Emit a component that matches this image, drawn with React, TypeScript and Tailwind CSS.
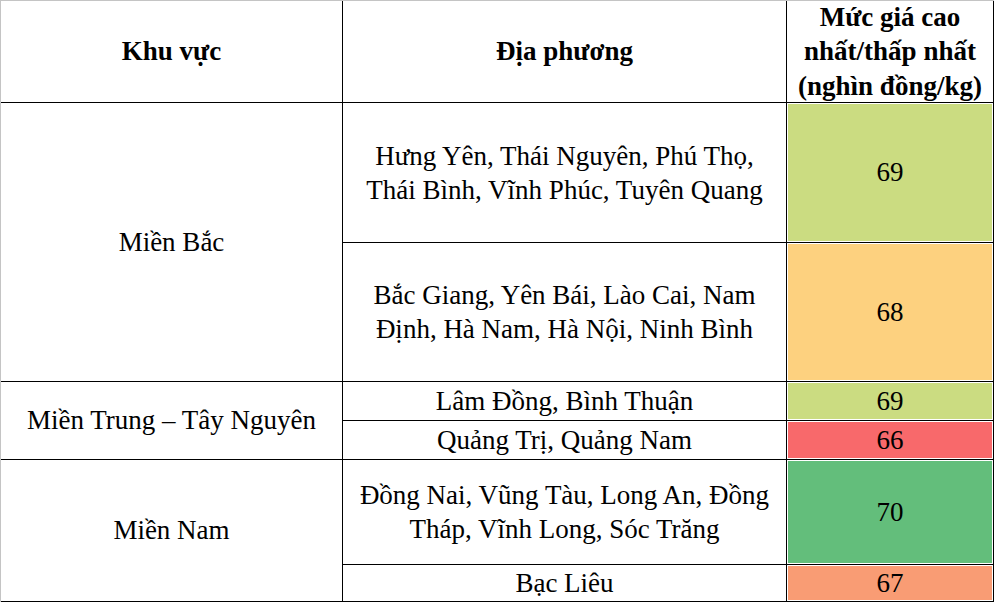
const rows = {
  north: [
    { places: ["Hưng Yên, Thái Nguyên, Phú Thọ,", "Thái Bình, Vĩnh Phúc, Tuyên Quang"], price: "69", color: "bg-[#cbdc81]" },
    { places: ["Bắc Giang, Yên Bái, Lào Cai, Nam", "Định, Hà Nam, Hà Nội, Ninh Bình"], price: "68", color: "bg-[#fdd17f]" },
  ],
  central: [
    { places: ["Lâm Đồng, Bình Thuận"], price: "69", color: "bg-[#cbdc81]" },
    { places: ["Quảng Trị, Quảng Nam"], price: "66", color: "bg-[#f8696b]" },
  ],
  south: [
    { places: ["Đồng Nai, Vũng Tàu, Long An, Đồng", "Tháp, Vĩnh Long, Sóc Trăng"], price: "70", color: "bg-[#63be7b]" },
    { places: ["Bạc Liêu"], price: "67", color: "bg-[#f99c74]" },
  ],
};

const cell = "flex items-center justify-center text-center border-r border-b border-black";

function Place({ lines }: { lines: string[] }) {
  return (
    <div className={cell}>
      <div className="leading-[34px]">
        {lines.map((l, i) => (
          <div key={i}>{l}</div>
        ))}
      </div>
    </div>
  );
}

function Price({ value, color }: { value: string; color: string }) {
  return (
    <div className="flex border-r border-b border-black bg-white p-px">
      <div className={`flex flex-1 items-center justify-center ${color}`}>{value}</div>
    </div>
  );
}

export default function App() {
  const all = [...rows.north, ...rows.central, ...rows.south];
  return (
    <div className="w-[1000px] h-[607px] bg-white font-['Liberation_Serif','Times_New_Roman',serif]">
      <div className="grid w-[994px] grid-cols-[342px_444px_207px] grid-rows-[102px_140px_139px_39px_39px_105px_37px] border-t border-l border-[#c4c4c4] text-[27px] text-black">
        <div className={`${cell} font-bold`}>Khu vực</div>
        <div className={`${cell} font-bold`}>Địa phương</div>
        <div className={`${cell} font-bold leading-[34.5px]`}>
          <div>
            Mức giá cao
            <br />
            nhất/thấp nhất
            <br />
            (nghìn đồng/kg)
          </div>
        </div>

        <div className={`${cell} row-span-2`}>Miền Bắc</div>
        <Place lines={all[0].places} />
        <Price value={all[0].price} color={all[0].color} />
        <Place lines={all[1].places} />
        <Price value={all[1].price} color={all[1].color} />

        <div className={`${cell} row-span-2`}>Miền Trung – Tây Nguyên</div>
        <Place lines={all[2].places} />
        <Price value={all[2].price} color={all[2].color} />
        <Place lines={all[3].places} />
        <Price value={all[3].price} color={all[3].color} />

        <div className={`${cell} row-span-2`}>Miền Nam</div>
        <Place lines={all[4].places} />
        <Price value={all[4].price} color={all[4].color} />
        <Place lines={all[5].places} />
        <Price value={all[5].price} color={all[5].color} />
      </div>
    </div>
  );
}
